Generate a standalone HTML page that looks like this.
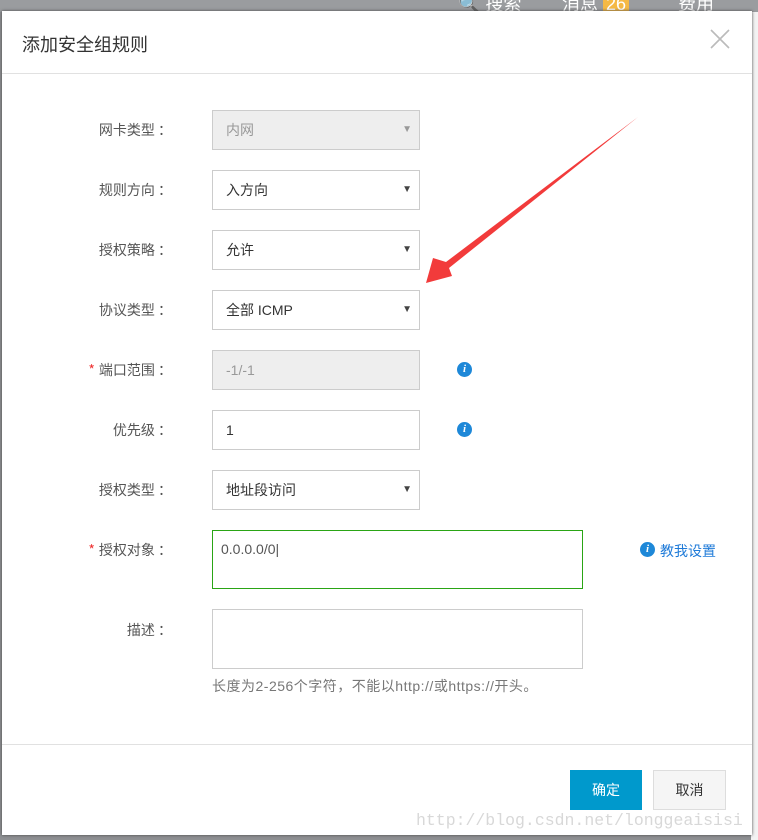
<!DOCTYPE html>
<html><head><meta charset="utf-8"><style>
*{box-sizing:border-box;margin:0;padding:0}
body{width:758px;height:840px;position:relative;overflow:hidden;background:#8e9093;font-family:"Liberation Sans","Noto Sans CJK SC",sans-serif;font-size:14px;color:#333}
.top{position:absolute;left:0;top:0;width:758px;height:12px;background:#9a9c9f;color:#fff;font-size:18px}
.top span{position:absolute;top:-10px}
.dlg{position:absolute;left:2px;top:11px;width:750px;height:824px;background:#fff;box-shadow:0 0 3px #444}
.hd{position:absolute;left:0;top:0;width:100%;height:63px;border-bottom:1px solid #e1e1e1}
.hd h1{position:absolute;left:20px;top:20px;font-size:18px;font-weight:normal;color:#333}
.x{position:absolute;right:22px;top:18px;width:20px;height:20px}
.lbl{position:absolute;width:170px;text-align:right;font-size:14px;color:#555;font-family:"Noto Sans CJK SC",sans-serif;line-height:20px}
.lbl b{color:#e33;font-weight:normal;margin-right:4px}
.inp{position:absolute;left:210px;width:208px;height:40px;border:1px solid #ccc;padding-left:13px;line-height:38px;font-size:14px;color:#333;background:#fff}
.dis{background:#eee;color:#999}
.arr{position:absolute;right:7px;top:0;font-size:10px;line-height:38px;color:#444}
.info{position:absolute;width:15px;height:15px;border-radius:50%;background:#1e88d8;color:#fff;font:italic bold 11px/15px "Liberation Serif",serif;text-align:center}
.ft{position:absolute;left:0;top:733px;width:100%;border-top:1px solid #e1e1e1}
.btn{position:absolute;top:759px;height:40px;line-height:40px;text-align:center;font-size:14px}
</style></head><body>
<div class="top"><span style="left:458px">🔍 搜索</span><span style="left:562px">消息 <i style="background:#f5b945;font-style:normal;padding:0 3px">26</i></span><span style="left:678px">费用</span></div>
<div style="position:absolute;left:751px;top:12px;width:7px;height:828px;background:#f3f3f3"></div>
<div class="dlg">
 <div class="hd"><h1>添加安全组规则</h1>
 <svg class="x" viewBox="0 0 20 20"><path d="M1 1L19 19M19 1L1 19" stroke="#bbb" stroke-width="1.6"/></svg></div>
 <div class="lbl" style="top:109px">网卡类型 ：</div>
 <div class="inp dis" style="top:99px">内网<span class="arr" style="color:#999">▼</span></div>
 <div class="lbl" style="top:169px">规则方向 ：</div>
 <div class="inp" style="top:159px">入方向<span class="arr">▼</span></div>
 <div class="lbl" style="top:229px">授权策略 ：</div>
 <div class="inp" style="top:219px">允许<span class="arr">▼</span></div>
 <div class="lbl" style="top:289px">协议类型 ：</div>
 <div class="inp" style="top:279px">全部 ICMP<span class="arr">▼</span></div>
 <div class="lbl" style="top:349px"><b>*</b>端口范围 ：</div>
 <div class="inp dis" style="top:339px">-1/-1</div>
 <div class="info" style="left:455px;top:351px">i</div>
 <div class="lbl" style="top:409px">优先级 ：</div>
 <div class="inp" style="top:399px">1</div>
 <div class="info" style="left:455px;top:411px">i</div>
 <div class="lbl" style="top:469px">授权类型 ：</div>
 <div class="inp" style="top:459px">地址段访问<span class="arr">▼</span></div>
 <div class="lbl" style="top:529px"><b>*</b>授权对象 ：</div>
 <div class="inp" style="top:519px;width:371px;height:59px;border-color:#2aa515;line-height:20px;padding-top:8px;padding-left:8px;color:#555">0.0.0.0/0|</div>
 <div class="info" style="left:638px;top:531px">i</div>
 <div style="position:absolute;left:658px;top:530px;color:#1e7ad8">教我设置</div>
 <div class="lbl" style="top:609px">描述 ：</div>
 <div class="inp" style="top:598px;width:371px;height:60px"></div>
 <div style="position:absolute;left:210px;top:665px;font-size:14px;letter-spacing:0.5px;color:#777">长度为2-256个字符，不能以http://或https://开头。</div>
 <div class="ft"></div>
 <div class="btn" style="left:568px;width:72px;background:#0099cc;color:#fff">确定</div>
 <div class="btn" style="left:651px;width:73px;background:#f5f5f5;border:1px solid #ddd;line-height:38px">取消</div>
 <div style="position:absolute;left:414px;top:800px;font:16.5px 'Liberation Mono',monospace;color:#d8d8d8">http://blog.csdn.net/longgeaisisi</div>
</div>
<svg style="position:absolute;left:0;top:0" width="758" height="840"><path d="M638 117L446 262L433 258L426 283L452 276L449 268Z" fill="#f23b3b"/></svg>
</body></html>
